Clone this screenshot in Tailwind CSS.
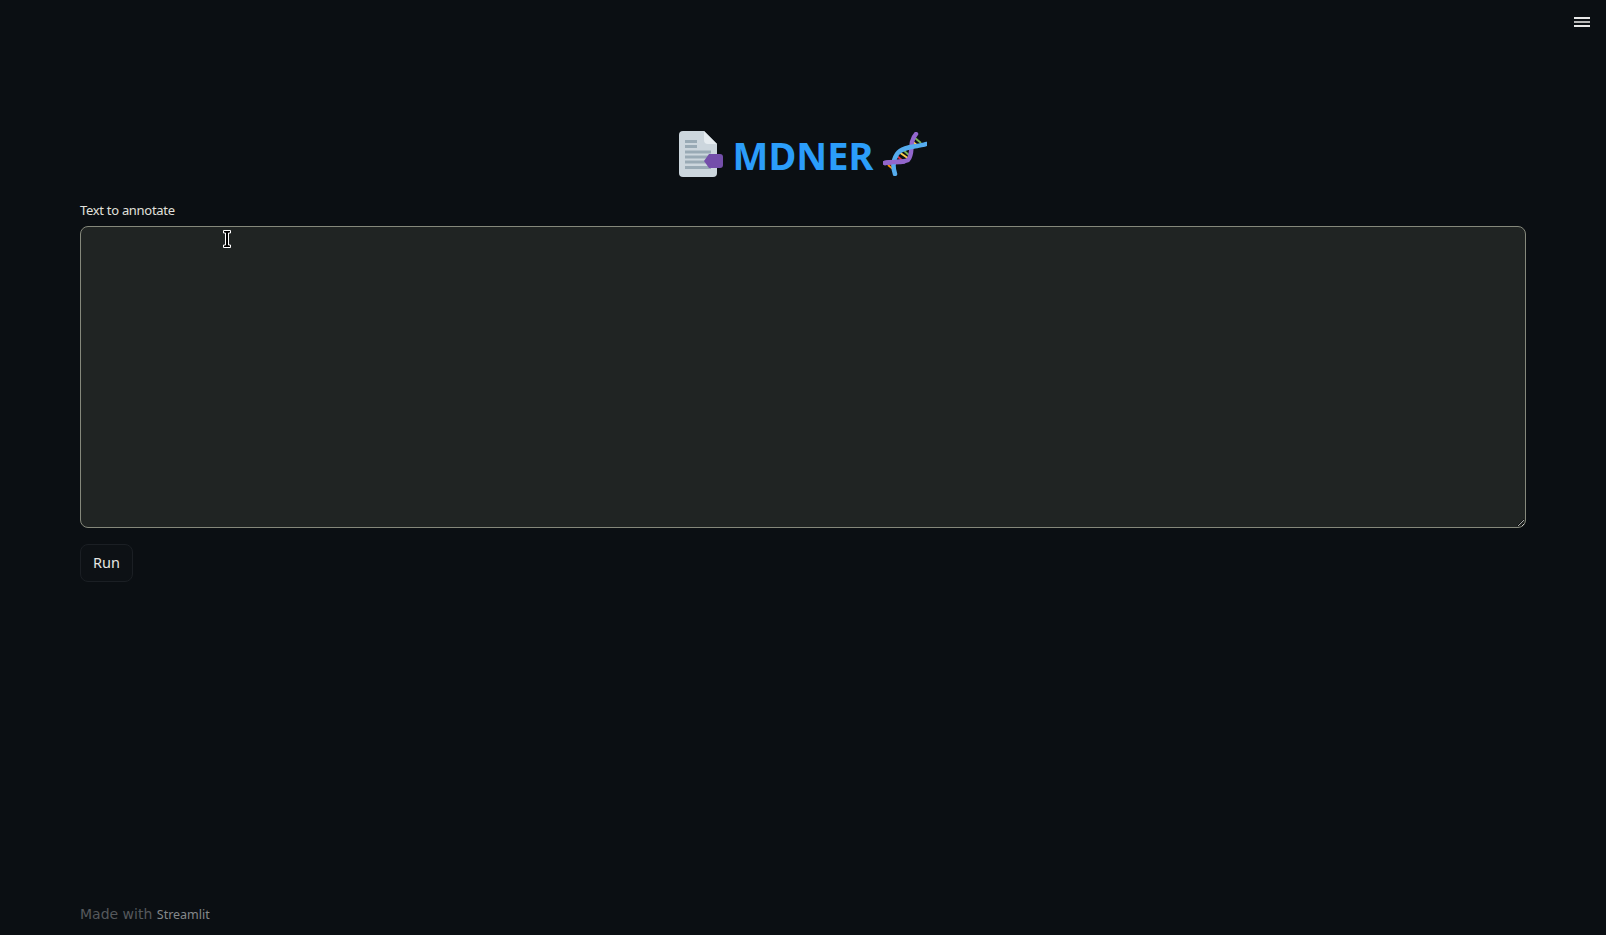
<!DOCTYPE html>
<html lang="en">
<head>
    <meta charset="UTF-8">
    <meta name="viewport" content="width=device-width, initial-scale=1.0">
    <title>MDNER</title>
    <script src="https://cdn.jsdelivr.net/npm/@tailwindcss/browser@4"></script>
</head>
<body class="h-[935px] overflow-hidden bg-[#0b0f13] font-['Noto_Sans',sans-serif]">
    <div class="flex flex-col h-full">
        <!-- Toolbar -->
        <header class="flex justify-end pt-[17px] pr-[16px] h-[131px]">
            <svg width="16" height="10" viewBox="0 0 16 10">
                <rect y="0" width="16" height="2" fill="#e8e8e8"/>
                <rect y="4" width="16" height="2" fill="#b5b5b5"/>
                <rect y="8" width="16" height="2" fill="#e8e8e8"/>
            </svg>
        </header>

        <main class="px-[80px] flex-1 flex flex-col">
            <!-- Title -->
            <div class="flex items-center justify-center gap-[10px] h-[46px]">
                <svg width="44" height="46" viewBox="0 0 44 46">
                    <path d="M4 0H25L38 13V42a4 4 0 0 1-4 4H4a4 4 0 0 1-4-4V4a4 4 0 0 1 4-4Z" fill="#ccd6dd"/>
                    <path d="M25 0L38 13H29a4 4 0 0 1-4-4Z" fill="#e6ecf0"/>
                    <g fill="#99aab5">
                        <rect x="6" y="9" width="12" height="3"/>
                        <rect x="6" y="14" width="12" height="3"/>
                        <rect x="6" y="19.5" width="26" height="3"/>
                        <rect x="6" y="24.5" width="24" height="3"/>
                        <rect x="6" y="29.5" width="24" height="3"/>
                        <rect x="6" y="35" width="26" height="3"/>
                    </g>
                    <path d="M30 23H41a3 3 0 0 1 3 3V34a3 3 0 0 1-3 3H30l-5-7Z" fill="#744eaa"/>
                </svg>
                <h1 class="mt-[2px] text-[38px] leading-none font-bold text-[#2b9dfa] font-['Noto_Sans',sans-serif]">MDNER</h1>
                <svg width="44" height="44" viewBox="0 0 44 44" fill="none">
                    <!-- rungs -->
                    <g stroke-width="2">
                        <path d="M32 6L38 11" stroke="#77b255"/>
                        <path d="M30 10L35 14" stroke="#ffcc4d"/>
                        <path d="M19 17L27 24" stroke="#77b255"/>
                        <path d="M16 20L26 27" stroke="#ffcc4d"/>
                        <path d="M14 24L20 29" stroke="#dd2e44"/>
                        <path d="M5 33L10 37" stroke="#f4900c"/>
                        <path d="M8 32L12 36" stroke="#dd2e44"/>
                    </g>
                    <!-- strands -->
                    <path d="M2 31C10 29 19 31 25 28C29 24 28 16 29 10C30 6 31 4 33 2" stroke="#9266cc" stroke-width="4.5" stroke-linecap="round"/>
                    <path d="M12 42C10 36 10 28 14 22C18 16 28 15 34 14C38 13 41 13 43 12" stroke="#55acee" stroke-width="4.5" stroke-linecap="round"/>
                    <path d="M2 31C8 29.5 15 30.5 21 29.5" stroke="#9266cc" stroke-width="4.5" stroke-linecap="round"/>
                </svg>
            </div>

            <!-- Text area -->
            <label class="mt-[23px] text-[13px] tracking-[-0.3px] leading-[20px] text-[#e0e0dc] font-['Noto_Sans',sans-serif]">Text to annotate</label>
            <div class="relative mt-[6px]">
                <textarea class="block w-full h-[302px] rounded-[8px] border border-[#85887b] bg-[#202423] resize-y"></textarea>
                <svg class="absolute left-[143px] top-[4px]" width="8" height="18" viewBox="0 0 8 18">
                    <path d="M0.5 0.5H7.5V3H5.5V15H7.5V17.5H0.5V15H2.5V3H0.5Z" fill="#000" stroke="#fff" stroke-width="1"/>
                </svg>
            </div>

            <!-- Run button -->
            <button class="mt-[16px] w-[53px] h-[38px] rounded-[8px] border border-[#1b1f24] bg-[#0d1115] text-[14.5px] text-[#e6e6e2] font-['Noto_Sans',sans-serif]">Run</button>

            <!-- Footer -->
            <footer class="mt-auto mb-[10px] text-[14px] leading-[20px] text-[#55585c] font-['DejaVu_Sans',sans-serif]">
                Made with <span class="text-[12.5px] text-[#85888a] font-['Noto_Sans',sans-serif]">Streamlit</span>
            </footer>
        </main>
    </div>
</body>
</html>
